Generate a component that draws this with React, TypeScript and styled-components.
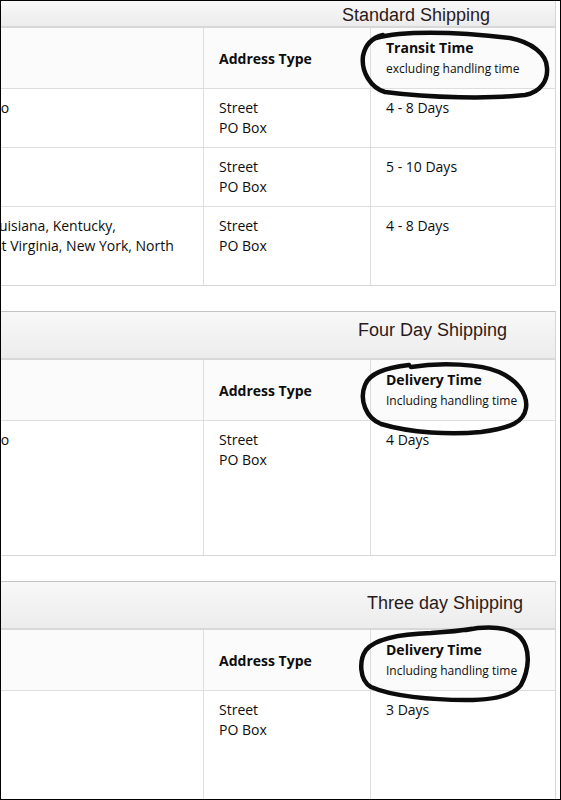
import styled, { createGlobalStyle } from 'styled-components';

const GlobalStyle = createGlobalStyle`
  html, body {
    margin: 0;
    padding: 0;
    background: #fff;
  }
`;

type Row = {
  region: string[];
  time: string;
  minH?: number;
};

type Shipping = {
  title: string;
  barH: number;
  barTop: number;
  titleRight: number;
  timeLabel: string;
  timeNote: string;
  ring: string;
  rows: Row[];
};

const sections: Shipping[] = [
  {
    title: 'Standard Shipping',
    barH: 25,
    barTop: 4,
    titleRight: 65,
    timeLabel: 'Transit Time',
    timeNote: 'excluding handling time',
    ring: 'M 5 10 C 30 3, 80 3, 139 10 C 160 14, 176 26, 176 40 C 177 52, 170 64, 154 67 C 120 71, 60 70, 14 64 C 0 60, -10 44, -8 28 C -6 18, 0 10, 12 7',
    rows: [
      { region: ['Alabama, Arizona, Arkansas, Idaho, Colorado', 'Lower 48 states'], time: '4 - 8 Days' },
      { region: ['Alaska, Hawaii'], time: '5 - 10 Days' },
      {
        region: [
          'Alabama, Arizona, Arkansas, Florida, DC, Louisiana, Kentucky,',
          'Mississippi, Tennessee, Iowa, Vermont, West Virginia, New York, North',
          'Carolina',
        ],
        time: '4 - 8 Days',
      },
    ],
  },
  {
    title: 'Four Day Shipping',
    barH: 46,
    barTop: 8,
    titleRight: 48,
    timeLabel: 'Delivery Time',
    timeNote: 'Including handling time',
    ring: 'M 40 7 C 70 2, 110 4, 128 12 C 146 20, 157 34, 155 48 C 153 62, 140 68, 110 72 C 80 75, 40 73, 10 64 C -5 58, -12 40, -6 25 C -2 14, 12 8, 38 5',
    rows: [
      { region: ['Alabama, Arizona, Arkansas, Idaho, Colorado', 'Lower 48 states'], time: '4 Days', minH: 134 },
    ],
  },
  {
    title: 'Three day Shipping',
    barH: 46,
    barTop: 11,
    titleRight: 32,
    timeLabel: 'Delivery Time',
    timeNote: 'Including handling time',
    ring: 'M 95 0 C 115 -4, 140 -4, 150 8 C 160 20, 158 40, 150 55 C 142 66, 120 70, 95 70 C 60 70, 20 66, 0 57 C -12 50, -12 30, -5 20 C 5 8, 30 4, 60 3 C 75 2, 88 1, 100 -1',
    rows: [{ region: ['Lower 48 states'], time: '3 Days', minH: 140 }],
  },
];

const App = () => (
  <>
    <GlobalStyle />
    <Frame>
      <Page>
        {sections.map((s) => (
          <Section key={s.title}>
            <Bar $h={s.barH} $top={s.barTop} $right={s.titleRight}>
              {s.title}
            </Bar>
            <HeadRow>
              <HeadCell />
              <HeadCell>Address Type</HeadCell>
              <HeadCell>
                <div>
                  <TimeLabel>{s.timeLabel}</TimeLabel>
                  <TimeNote>{s.timeNote}</TimeNote>
                </div>
                <Ring viewBox="0 0 185 60" aria-hidden>
                  <path d={s.ring} />
                </Ring>
              </HeadCell>
            </HeadRow>
            {s.rows.map((r, i) => (
              <DataRow key={i} $minH={r.minH}>
                <RegionCell>
                  {r.region.map((line) => (
                    <Line key={line}>{line}</Line>
                  ))}
                </RegionCell>
                <Cell>
                  <Line>Street</Line>
                  <Line>PO Box</Line>
                </Cell>
                <Cell>
                  <Line>{r.time}</Line>
                </Cell>
              </DataRow>
            ))}
          </Section>
        ))}
      </Page>
    </Frame>
  </>
);

export default App;

// --- Styled Components ---
const Frame = styled.div`
  width: 561px;
  height: 800px;
  box-sizing: border-box;
  border: 1px solid #000;
  overflow: hidden;
  background: #fff;
`;

const Page = styled.div`
  margin: -1px 0 0 -300px;
  width: 855px;
  display: flex;
  flex-direction: column;
  gap: 25px;
  font-family: 'Open Sans', 'Noto Sans', sans-serif;
  font-size: 14px;
  color: #0d0d0d;
`;

const Section = styled.section`
  border: 1px solid #d6d6d6;
  border-top-color: #c4c4c4;
  background: #fff;
`;

const Bar = styled.div<{ $h: number; $top: number; $right: number }>`
  box-sizing: border-box;
  height: ${({ $h }) => $h + 2}px;
  padding: ${({ $top }) => $top}px ${({ $right }) => $right}px 0 0;
  display: flex;
  justify-content: flex-end;
  background: linear-gradient(#f8f8f8, #ececec);
  border-bottom: 2px solid #d8d8d8;
  font-family: 'Liberation Sans', Arial, sans-serif;
  font-size: 18px;
  line-height: 20px;
  color: #2b1a1a;
`;

const Grid = styled.div`
  display: grid;
  grid-template-columns: 501px 167px 1fr;
  border-bottom: 1px solid #dedede;

  &:last-child {
    border-bottom: none;
  }
`;

const HeadRow = styled(Grid)`
  height: 61px;
  box-sizing: border-box;
  background: #fbfbfb;
`;

const DataRow = styled(Grid)<{ $minH?: number }>`
  min-height: ${({ $minH }) => ($minH ? `${$minH}px` : 'auto')};
`;

const HeadCell = styled.div`
  position: relative;
  display: flex;
  align-items: center;
  padding: 0 15px;
  font-weight: 700;

  & + & {
    border-left: 1px solid #dedede;
  }
`;

const TimeLabel = styled.div`
  font-size: 14px;
  line-height: 22px;
  font-weight: 700;
`;

const TimeNote = styled.div`
  font-size: 12px;
  line-height: 20px;
  font-weight: 400;
`;

const Ring = styled.svg`
  position: absolute;
  left: 0;
  top: 0;
  width: 185px;
  height: 60px;
  overflow: visible;
  pointer-events: none;

  path {
    fill: none;
    stroke: #0c0c0c;
    stroke-width: 4.5;
    stroke-linecap: round;
    stroke-linejoin: round;
  }
`;

const Cell = styled.div`
  padding: 9px 15px;
  line-height: 20px;
  border-left: 1px solid #dedede;
`;

const RegionCell = styled.div`
  padding: 9px 15px;
  line-height: 20px;
`;

const Line = styled.div`
  white-space: nowrap;
`;
